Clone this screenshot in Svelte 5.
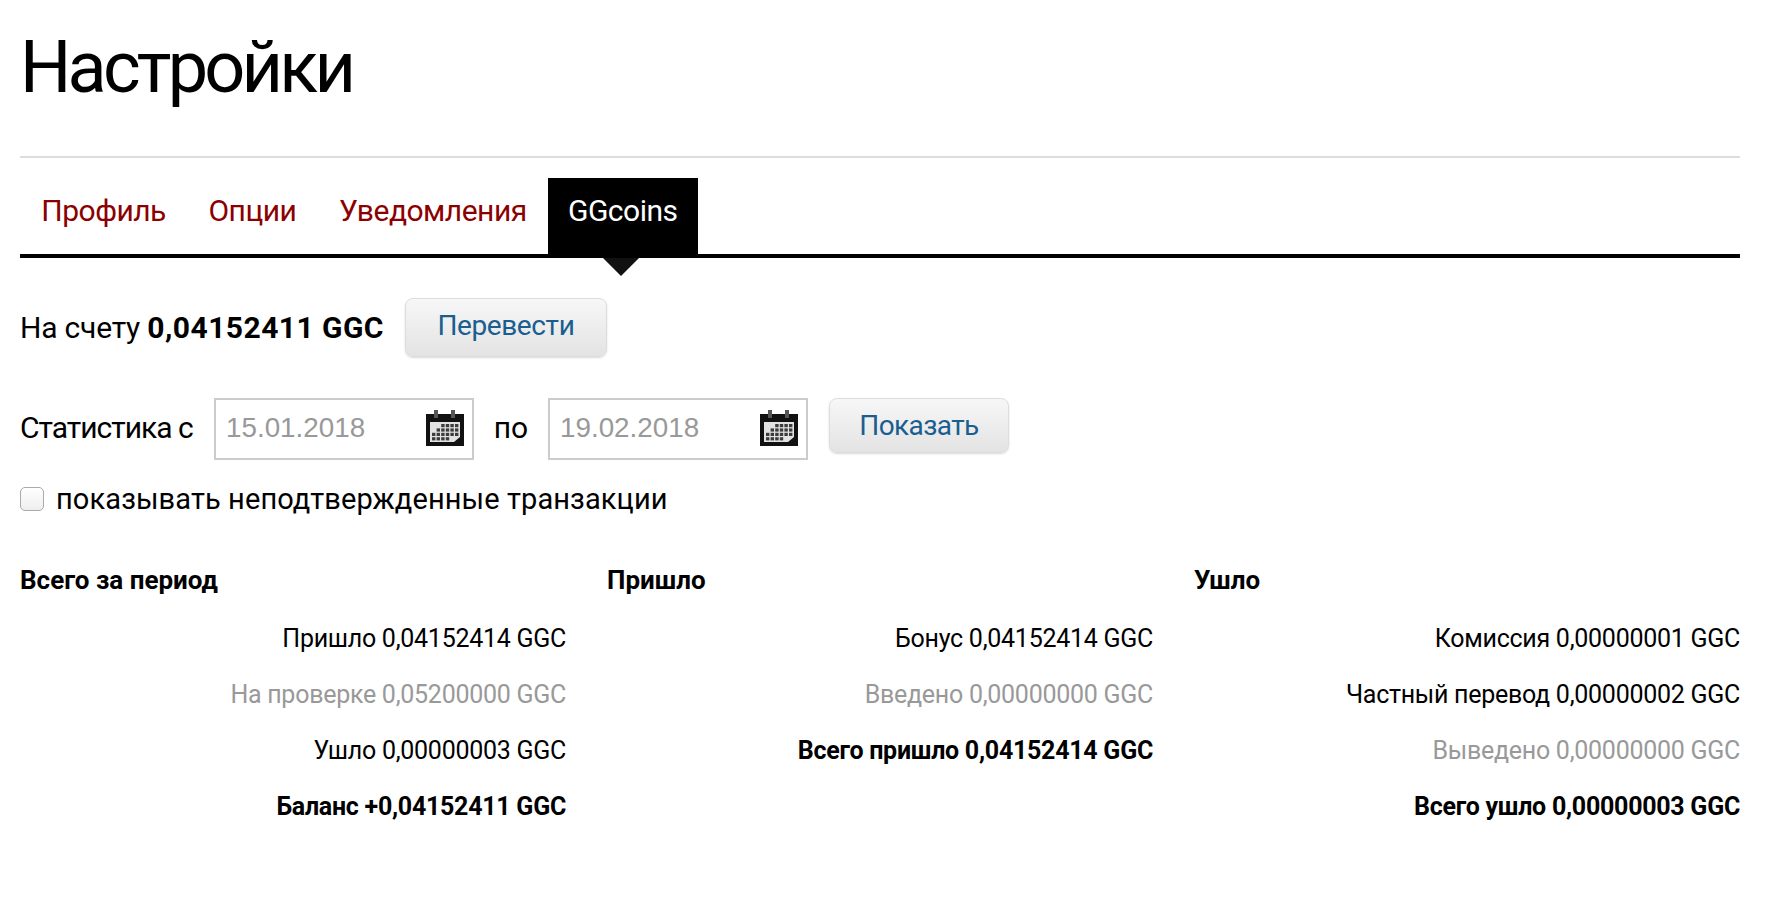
<script>
	const columns = [
		{
			title: 'Всего за период',
			rows: [
				{ text: 'Пришло 0,04152414 GGC' },
				{ text: 'На проверке 0,05200000 GGC', kind: 'muted' },
				{ text: 'Ушло 0,00000003 GGC' },
				{ text: 'Баланс +0,04152411 GGC', kind: 'total' }
			]
		},
		{
			title: 'Пришло',
			rows: [
				{ text: 'Бонус 0,04152414 GGC' },
				{ text: 'Введено 0,00000000 GGC', kind: 'muted' },
				{ text: 'Всего пришло 0,04152414 GGC', kind: 'total' }
			]
		},
		{
			title: 'Ушло',
			rows: [
				{ text: 'Комиссия 0,00000001 GGC' },
				{ text: 'Частный перевод 0,00000002 GGC' },
				{ text: 'Выведено 0,00000000 GGC', kind: 'muted' },
				{ text: 'Всего ушло 0,00000003 GGC', kind: 'total' }
			]
		}
	];

	const tabs = ['Профиль', 'Опции', 'Уведомления', 'GGcoins'];
	const active = 'GGcoins';
	const dates = ['15.01.2018', '19.02.2018'];

	// calendar cells, row by row; the sheet has a folded corner so some are left out
	const cells = [
		[0, 0, 1, 1, 1, 1],
		[0, 1, 1, 1, 1, 1],
		[1, 1, 1, 1, 1, 1],
		[1, 1, 1, 1, 0, 0]
	];
</script>

{#snippet calendar()}
	<svg class="cal" width="38" height="36" viewBox="0 0 38 36">
		<rect x="0" y="4" width="38" height="32" fill="#111" />
		<rect x="8" y="0" width="4" height="8" fill="#555" />
		<rect x="25" y="0" width="4" height="8" fill="#555" />
		<path d="M4 12H34V27L28 32H4Z" fill="#e2e2e2" />
		{#each cells as row, r}
			{#each row as on, c}
				{#if on}
					<rect x={6 + c * 4.6} y={14 + r * 4.4} width="3.4" height="3.2" fill="#3c3c3c" />
				{/if}
			{/each}
		{/each}
	</svg>
{/snippet}

<div class="page">
	<h1>Настройки</h1>
	<nav class="tabs">
		{#each tabs as tab}
			<a href="#top" class="tab" class:active={tab === active}>{tab}</a>
		{/each}
	</nav>

	<div class="balance">
		<span>На счету <b>0,04152411 GGC</b></span>
		<button class="btn transfer">Перевести</button>
	</div>

	<div class="period">
		<span class="label">Статистика с</span>
		<div class="date">
			<span>{dates[0]}</span>
			{@render calendar()}
		</div>
		<span class="by">по</span>
		<div class="date">
			<span>{dates[1]}</span>
			{@render calendar()}
		</div>
		<button class="btn show">Показать</button>
	</div>

	<label class="unconfirmed">
		<input type="checkbox" />
		<span>показывать неподтвержденные транзакции</span>
	</label>

	<div class="stats">
		{#each columns as col}
			<section>
				<h3>{col.title}</h3>
				{#each col.rows as row}
					<p class={row.kind}>{row.text}</p>
				{/each}
			</section>
		{/each}
	</div>
</div>

<style>
	:global(body) {
		margin: 0;
		background: #fff;
		color: #000;
		font-family: Roboto, 'Noto Sans', sans-serif;
	}

	.page {
		padding: 0 28px 0 20px;
		height: 898px;
		box-sizing: border-box;
		overflow: hidden;
	}

	h1 {
		margin: 0;
		height: 158px;
		box-sizing: border-box;
		padding-top: 23px;
		border-bottom: 2px solid #ddd;
		font-size: 72px;
		line-height: 90px;
		font-weight: 400;
		letter-spacing: -3.8px;
	}

	.tabs {
		display: flex;
		margin-top: 20px;
		height: 76px;
		border-bottom: 4px solid #000;
	}

	.tab {
		position: relative;
		padding: 0 21.3px;
		font-size: 30px;
		line-height: 66px;
		color: #8b0000;
		text-decoration: none;
		letter-spacing: -0.5px;
	}

	.tab.active {
		padding: 0 20px;
		background: #000;
		color: #fff;
	}

	.tab.active::after {
		content: '';
		position: absolute;
		left: 55px;
		top: 80px;
		border-style: solid;
		border-width: 18px 18px 0;
		border-color: #111 transparent transparent;
	}

	.balance {
		display: flex;
		align-items: center;
		gap: 21px;
		margin-top: 40px;
		font-size: 30px;
		letter-spacing: -0.2px;
	}

	.balance b {
		letter-spacing: 0.45px;
	}

	.btn {
		border: 1px solid #ddd;
		border-radius: 8px;
		background: linear-gradient(#f7f7f7, #e3e3e3);
		box-shadow: 0 1px 2px rgba(0, 0, 0, 0.15);
		color: #1a5e90;
		font: inherit;
		font-size: 28px;
		line-height: 1;
		padding: 0 0 3px;
		letter-spacing: -0.4px;
	}

	.transfer {
		width: 202px;
		height: 59px;
	}

	.period {
		display: flex;
		align-items: flex-start;
		margin-top: 41px;
		font-size: 30px;
		line-height: 60px;
	}

	.label {
		width: 194px;
		letter-spacing: -1px;
	}

	.by {
		width: 74px;
		text-align: center;
	}

	.date {
		display: flex;
		align-items: center;
		justify-content: space-between;
		box-sizing: border-box;
		width: 260px;
		height: 62px;
		padding: 0 8px 2px 10px;
		border: 2px solid #ccc;
		font-family: 'Liberation Sans', Arial, sans-serif;
		font-size: 27.8px;
		color: #999;
	}

	.show {
		width: 180px;
		height: 55px;
		margin-left: 21px;
		padding: 0;
		letter-spacing: -0.6px;
	}

	.unconfirmed {
		display: flex;
		align-items: center;
		gap: 12px;
		margin-top: 27px;
		height: 24px;
		font-size: 29px;
		letter-spacing: 0.1px;
	}

	.unconfirmed input {
		appearance: none;
		width: 24px;
		height: 24px;
		margin: 0;
		border: 1px solid #aaa;
		border-radius: 5px;
		background: linear-gradient(#fff, #eee);
	}

	.stats {
		display: grid;
		grid-template-columns: repeat(3, 546px);
		gap: 41px;
		margin-top: 51px;
	}

	h3 {
		margin: 0 0 13px;
		font-size: 26px;
		line-height: 36px;
		font-weight: 700;
	}

	p {
		margin: 0;
		text-align: right;
		font-size: 25px;
		line-height: 56px;
		letter-spacing: -0.27px;
	}

	.muted {
		color: #999;
	}

	.total {
		font-weight: 700;
	}
</style>
